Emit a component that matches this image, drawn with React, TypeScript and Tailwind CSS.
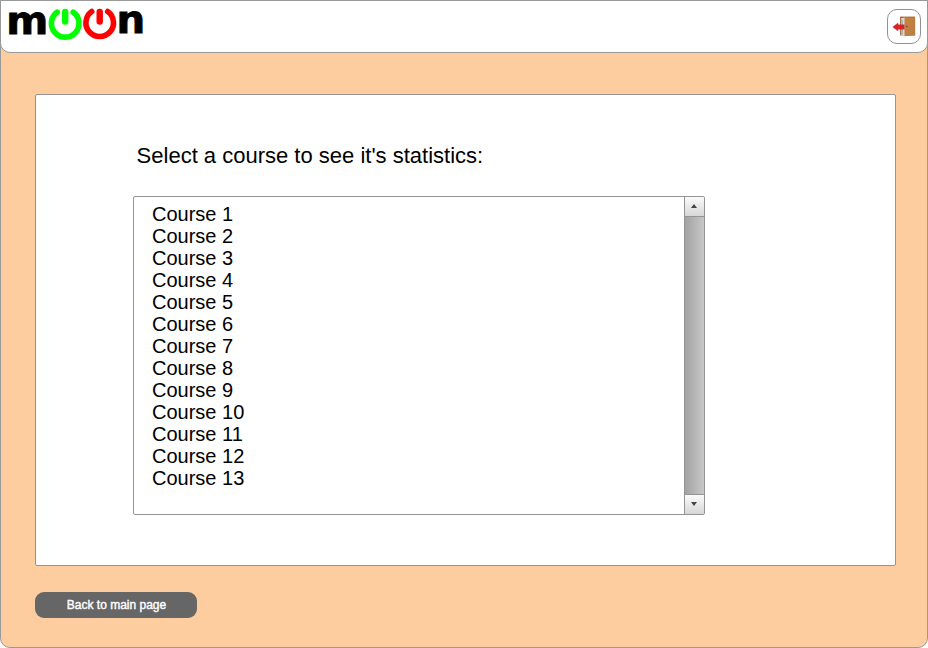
import React from "react";

const courses = Array.from({ length: 13 }, (_, i) => `Course ${i + 1}`);

function Logo() {
  return (
    <svg className="overflow-visible" width="148" height="50" viewBox="0 0 148 50" role="img" aria-label="moon">
      <g fontFamily="'DejaVu Sans'" fontWeight="700" fontSize="36" fill="#000" stroke="#000" strokeWidth=".8">
        <text transform="translate(2.3 33) scale(1.12 1.03)">m</text>
        <text transform="translate(112.4 32.2) scale(1.12 1.03)">n</text>
      </g>
      <g fill="none" strokeLinecap="round">
        <g stroke="#00ff00">
          <path d="M53.2 11.1A13.8 13.8 0 1 0 69.2 11.1" strokeWidth="5.6" />
          <path d="M61.2 11V20.6" strokeWidth="6.4" />
        </g>
        <g stroke="#ff0000">
          <path d="M87.7 10.5A13.8 13.8 0 1 0 103.7 10.5" strokeWidth="5.6" />
          <path d="M95.7 11V20.6" strokeWidth="6.4" />
        </g>
      </g>
    </svg>
  );
}

function ExitIcon() {
  return (
    <svg width="24" height="22" viewBox="0 0 24 22">
      <defs>
        <linearGradient id="door" x1="0" y1="0" x2="1" y2="1">
          <stop stopColor="#c9833f" />
          <stop offset="1" stopColor="#b97c43" />
        </linearGradient>
      </defs>
      <path d="M8 .6H23V19.5H8Z" fill="#a4662f" />
      <path d="M8.9 2.2L12.5 1.8V19.4H8.9Z" fill="#d5dcdf" />
      <path d="M8.9 2.5L11 4.5V18.5L8.9 19Z" fill="#aab3b8" />
      <path d="M12.2 1.5H23.2V19.3L12.2 20.3Z" fill="url(#door)" />
      <path d="M12.2 20.3V1.5" stroke="#e4e4df" strokeWidth=".6" />
      <circle cx="14.8" cy="10.5" r=".8" fill="#70411d" />
      <path d="M.7 11L6 6.9V8.7H12.3V13.2H6V15Z" fill="#e01f25" stroke="#c2383a" strokeWidth=".4" />
    </svg>
  );
}

function ScrollBar() {
  return (
    <div className="flex w-5 shrink-0 flex-col border-l border-[#949494] bg-linear-to-r from-[#a2a2a2] to-[#c8c8c8]">
      <button className="flex h-5 shrink-0 items-center justify-center border-b border-[#949494] bg-linear-to-b from-[#fbfbfb] to-[#d6d6d6] pb-px pr-px">
        <svg width="6" height="4" viewBox="0 0 6 4"><path d="M0 4L3 0L6 4Z" fill="#444" /></svg>
      </button>
      <div className="grow" />
      <button className="flex h-5 shrink-0 items-center justify-center border-t border-[#949494] bg-linear-to-b from-[#fbfbfb] to-[#d6d6d6] pb-px pr-px">
        <svg width="6" height="4" viewBox="0 0 6 4"><path d="M0 0L3 4L6 0Z" fill="#444" /></svg>
      </button>
    </div>
  );
}

export default function App() {
  return (
    <div className="h-[648px] w-[928px] bg-white font-['Liberation_Sans',sans-serif] text-black">
      <div className="flex h-full flex-col rounded-b-[10px] border border-[#999] bg-[#fecd9f]">
        <header className="-mx-px -mt-px flex h-[53px] shrink-0 items-start justify-between rounded-b-[10px] border border-[#999] bg-white pr-[6px]">
          <div className="pl-[3px]"><Logo /></div>
          <button className="mt-2 flex h-[35px] w-[34px] items-center justify-center rounded-[10px] border border-[#929292] bg-white">
            <ExitIcon />
          </button>
        </header>
        <main className="ml-[34px] mt-[41px] h-[472px] w-[861px] shrink-0 rounded-[2px] border border-[#949494] bg-white pl-[97px] pt-[48px]">
          <h1 className="pl-[3.6px] text-[22px] leading-[26px]">Select a course to see it's statistics:</h1>
          <div className="mt-[27px] flex h-[319px] w-[572px] overflow-hidden rounded-[2px] border border-[#949494]">
            <ul className="grow pl-[18px] pt-[6px] text-[20px] leading-[22px]">
              {courses.map((course) => <li key={course}>{course}</li>)}
            </ul>
            <ScrollBar />
          </div>
        </main>
        <button className="ml-[34px] mt-[26px] h-[26px] w-[162px] rounded-[9px] bg-[#666] pl-px text-[12px] leading-[26px] text-white [-webkit-text-stroke:0.4px_white]">
          Back to main page
        </button>
      </div>
    </div>
  );
}
